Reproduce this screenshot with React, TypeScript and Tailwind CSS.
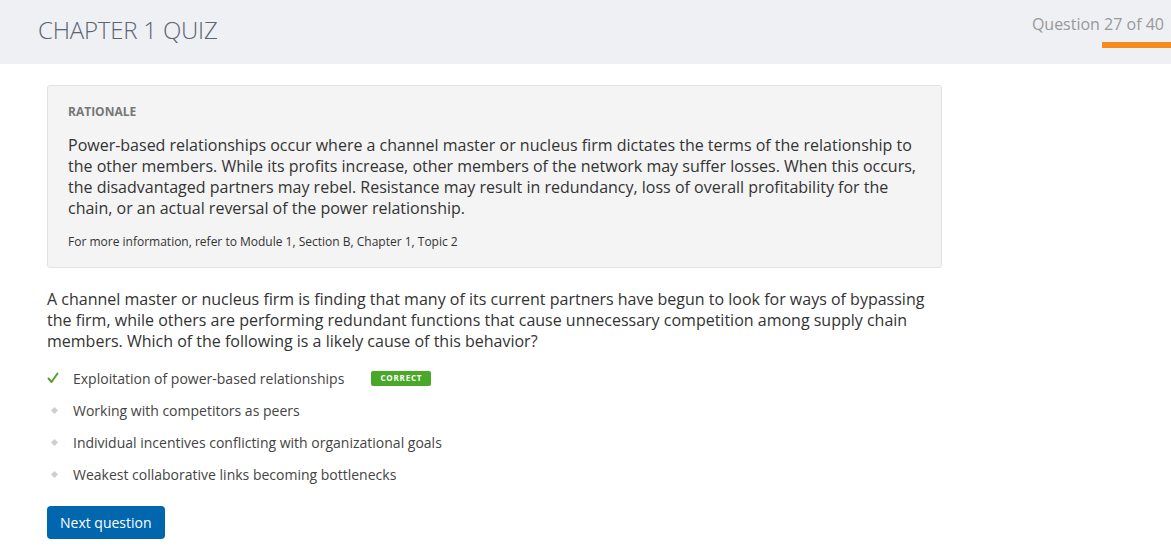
import React from 'react';

const options = [
  { text: 'Exploitation of power-based relationships', correct: true },
  { text: 'Working with competitors as peers', correct: false },
  { text: 'Individual incentives conflicting with organizational goals', correct: false },
  { text: 'Weakest collaborative links becoming bottlenecks', correct: false },
];

const CheckMark = () => (
  <svg width="12" height="12" viewBox="0 0 12 12" className="shrink-0">
    <path d="M1.5 6.5 L4.5 10 L10.5 1.5" fill="none" stroke="#5a9e2f" strokeWidth="2" strokeLinecap="round" strokeLinejoin="round" />
  </svg>
);

export default function App() {
  return (
    <div className="w-[1171px] h-[548px] overflow-hidden bg-white font-['Open_Sans',sans-serif] text-[#333]">
      {/* Header */}
      <div className="h-16 bg-[#eef0f4] flex justify-between">
        <h1 className="pl-[38px] pt-[14px] text-[24px] font-light text-[#5b6470] leading-8 tracking-[-0.2px]">
          CHAPTER 1 QUIZ
        </h1>
        <div className="flex flex-col items-end pt-[14px]">
          <span className="pr-[7px] text-[16px] leading-5 text-[#999]">Question 27 of 40</span>
          <div className="mt-[8px] w-[69px] h-[6px] bg-[#f68b1f]" />
        </div>
      </div>

      <div className="px-[47px] pt-[21px]">
        {/* Rationale */}
        <div className="w-[895px] bg-[#f4f4f4] border border-[#e2e2e2] rounded-[3px] px-[20px] pt-[18px] pb-[17px]">
          <h2 className="text-[12px] font-bold leading-4 text-[#777]">RATIONALE</h2>
          <p className="mt-[15px] text-[16px] leading-[21px] text-[#333]">
            Power-based relationships occur where a channel master or nucleus firm dictates the terms of the relationship to the other members. While its profits increase, other members of the network may suffer losses. When this occurs, the disadvantaged partners may rebel. Resistance may result in redundancy, loss of overall profitability for the chain, or an actual reversal of the power relationship.
          </p>
          <p className="mt-[15px] text-[12px] leading-4 text-[#333]">
            For more information, refer to Module 1, Section B, Chapter 1, Topic 2
          </p>
        </div>

        {/* Question */}
        <p className="mt-[21px] w-[890px] text-[16px] leading-[21px] text-[#333]">
          A channel master or nucleus firm is finding that many of its current partners have begun to look for ways of bypassing the firm, while others are performing redundant functions that cause unnecessary competition among supply chain members. Which of the following is a likely cause of this behavior?
        </p>

        <ul className="mt-[10px]">
          {options.map((o) => (
            <li key={o.text} className="h-8 flex items-center text-[14px] text-[#444]">
              <span className="w-[26px] flex items-center">
                {o.correct ? (
                  <CheckMark />
                ) : (
                  <span className="ml-[5px] w-[5px] h-[5px] rotate-45 bg-[#cfcfcf]" />
                )}
              </span>
              <span>{o.text}</span>
              {o.correct && (
                <span className="ml-[27px] h-[15px] w-[60px] flex items-center justify-center rounded-[2px] bg-[#4aa829] text-[8px] font-bold tracking-[0.8px] text-white">
                  CORRECT
                </span>
              )}
            </li>
          ))}
        </ul>

        <button className="mt-[16px] h-[33px] px-[13px] rounded-[4px] bg-[#0066ad] text-white text-[14px] font-medium">
          Next question
        </button>
      </div>
    </div>
  );
}
